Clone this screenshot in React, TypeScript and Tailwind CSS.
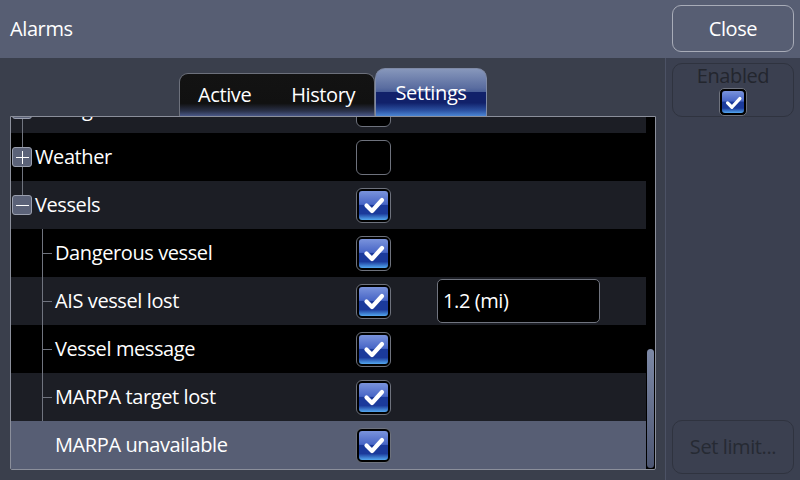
import React from "react";

const font = { fontFamily: '"Open Sans", "Noto Sans", "Liberation Sans", sans-serif' };

function Check({ size = 35 }: { size?: number }) {
  const big = size === 35;
  return (
    <div
      className={
        big
          ? "w-[35px] h-[35px] shrink-0 rounded-[6px] border border-[#6e727d] bg-black p-[2px]"
          : "w-[28px] h-[28px] shrink-0 rounded-[5px] border border-[#6e727d] bg-black p-[2px]"
      }
    >
      <div className="w-full h-full rounded-[3px] bg-[linear-gradient(to_bottom,#7a93dc_0%,#4866c6_46%,#1b3a9b_50%,#1b3a9b_78%,#54a8f0_100%)] flex items-center justify-center">
        <svg viewBox="0 0 24 24" className={big ? "w-[24px] h-[24px]" : "w-[19px] h-[19px]"}>
          <path d="M4.5 12.5 L10 18 L20 7" fill="none" stroke="white" strokeWidth="4.2" strokeLinecap="round" strokeLinejoin="round" />
        </svg>
      </div>
    </div>
  );
}

function Empty() {
  return <div className="w-[35px] h-[35px] shrink-0 rounded-[6px] border border-[#6e727d] bg-black" />;
}

function Expander({ open }: { open: boolean }) {
  return (
    <div className="absolute left-[1px] top-1/2 -translate-y-1/2 w-[20px] h-[20px] rounded-[3px] border border-[#9a9fae] bg-[#5b6278] flex items-center justify-center">
      <div className="relative w-[13px] h-[13px]">
        <div className="absolute left-0 right-0 top-[6px] h-px bg-white" />
        {!open && <div className="absolute top-0 bottom-0 left-[6px] w-px bg-white" />}
      </div>
    </div>
  );
}

type Row = {
  label: string;
  level: 0 | 1;
  bg: string;
  checked: boolean | null;
  expander?: "open" | "closed";
  lineTop?: "full" | "half";
  childLine?: boolean;
  input?: string;
};

const rows: Row[] = [
  { label: "Sailing", level: 0, bg: "bg-[#1c1e25]", checked: false, expander: "closed", lineTop: "full" },
  { label: "Weather", level: 0, bg: "bg-black", checked: false, expander: "closed", lineTop: "full" },
  { label: "Vessels", level: 0, bg: "bg-[#1c1e25]", checked: true, expander: "open", lineTop: "half" },
  { label: "Dangerous vessel", level: 1, bg: "bg-black", checked: true, childLine: true },
  { label: "AIS vessel lost", level: 1, bg: "bg-[#1c1e25]", checked: true, childLine: true, input: "1.2 (mi)" },
  { label: "Vessel message", level: 1, bg: "bg-black", checked: true, childLine: true },
  { label: "MARPA target lost", level: 1, bg: "bg-[#1c1e25]", checked: true, childLine: true },
  { label: "MARPA unavailable", level: 1, bg: "bg-[#575e74]", checked: true },
];

const txt = "text-[20px] tracking-[-0.4px]";

export default function App() {
  return (
    <div style={font} className="w-[800px] h-[480px] flex flex-col bg-[#3a3f4c] text-white overflow-hidden">
      {/* Header */}
      <div className="h-[58px] shrink-0 bg-[#575e73] flex items-center justify-between pl-[10px] pr-[6px]">
        <div className={`${txt} text-white`}>Alarms</div>
        <button className={`w-[122px] h-[47px] mb-[1px] rounded-[9px] border border-[#a8acb8] ${txt} text-white`}>
          Close
        </button>
      </div>

      {/* Body */}
      <div className="flex-1 flex min-h-0">
        {/* Left */}
        <div className="w-[666px] flex flex-col pl-[10px] pr-[9px] pt-[10px] pb-[10px] border-r border-[#4c5265]">
          {/* Tabs */}
          <div className="flex items-end pl-[169px] h-[48px] shrink-0">
            <div className={`w-[196px] h-[43px] rounded-t-[9px] border border-b-0 border-[#6d717c] bg-[linear-gradient(to_bottom,#131313_0%,#111111_70%,#2a3148_88%,#4a5888_100%)] flex items-center ${txt} pl-[18px]`}>
              <span>Active</span>
              <span className="ml-[40px]">History</span>
            </div>
            <div className={`w-[112px] h-[48px] rounded-t-[10px] border border-b-0 border-[#7f8aa6] bg-[linear-gradient(to_bottom,#8797bb_0%,#5a6da0_40%,#4a5f98_48%,#11216a_50%,#11216a_72%,#2b50a0_88%,#4b86d4_100%)] flex items-center justify-center ${txt}`}>
              Settings
            </div>
          </div>
          {/* Panel */}
          <div className="flex-1 min-h-0 flex border border-[#8b8f9b] rounded-b-[2px] bg-black">
            <div className="flex-1 overflow-hidden">
              <div className="mt-[-32px]">
                {rows.map((r, i) => (
                  <div key={i} className={`h-[48px] flex items-center ${r.bg}`}>
                    <div className="relative w-[345px] h-full flex items-center shrink-0">
                      {r.lineTop === "full" && <div className="absolute left-[11px] top-0 bottom-0 w-px bg-[#70747f]" />}
                      {r.lineTop === "half" && <div className="absolute left-[11px] top-0 h-1/2 w-px bg-[#70747f]" />}
                      {r.expander && <Expander open={r.expander === "open"} />}
                      {r.childLine && (
                        <>
                          <div className="absolute left-[31px] top-0 bottom-0 w-px bg-[#70747f]" />
                          <div className="absolute left-[31px] top-1/2 w-[10px] h-px bg-[#70747f]" />
                        </>
                      )}
                      <span className={`${txt} whitespace-nowrap ${r.level === 0 ? "ml-[24px]" : "ml-[44px]"}`}>
                        {r.label}
                      </span>
                    </div>
                    {r.checked ? <Check /> : <Empty />}
                    {r.input && (
                      <div className={`ml-[46px] w-[163px] h-[44px] rounded-[5px] border border-[#70747f] bg-black flex items-center pl-[5px] ${txt}`}>
                        {r.input}
                      </div>
                    )}
                  </div>
                ))}
              </div>
            </div>
            {/* Scrollbar */}
            <div className="w-[9px] flex flex-col justify-end items-center pb-[1px]">
              <div className="w-[7px] h-[119px] rounded-full bg-[linear-gradient(to_bottom,#7d89a6,#4d5672)]" />
            </div>
          </div>
        </div>

        {/* Right */}
        <div className="flex-1 flex flex-col px-[6px] pt-[5px] pb-[6px] bg-[#3b4050]">
          <div className="h-[54px] rounded-[10px] border border-[#2f333f] flex flex-col items-center">
            <div className={`${txt} leading-[24px] text-[#23262e]`}>Enabled</div>
            <Check size={28} />
          </div>
          <div className="flex-1" />
          <div className={`h-[54px] rounded-[10px] border border-[#2f333f] flex items-center justify-center ${txt} text-[#262a33]`}>
            Set limit...
          </div>
        </div>
      </div>
    </div>
  );
}
